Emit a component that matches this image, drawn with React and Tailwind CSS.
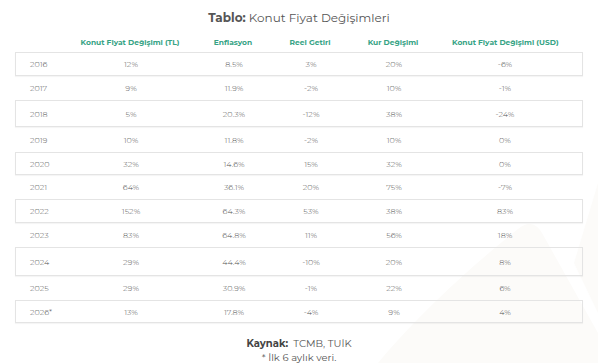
import React from 'react';

const rows = [
  { year: '2016', tl: '12%', inf: '8.5%', reel: '3%', kur: '20%', usd: '-6%', box: true, h: 'h-[24px]' },
  { year: '2017', tl: '9%', inf: '11.9%', reel: '-2%', kur: '10%', usd: '-1%', box: false, h: 'h-[24px]' },
  { year: '2018', tl: '5%', inf: '20.3%', reel: '-12%', kur: '38%', usd: '-24%', box: true, h: 'h-[27px]' },
  { year: '2019', tl: '10%', inf: '11.8%', reel: '-2%', kur: '10%', usd: '0%', box: false, h: 'h-[25px]' },
  { year: '2020', tl: '32%', inf: '14.6%', reel: '15%', kur: '32%', usd: '0%', box: true, h: 'h-[23px]' },
  { year: '2021', tl: '64%', inf: '36.1%', reel: '20%', kur: '75%', usd: '-7%', box: false, h: 'h-[24px]' },
  { year: '2022', tl: '152%', inf: '64.3%', reel: '53%', kur: '38%', usd: '83%', box: true, h: 'h-[24px]' },
  { year: '2023', tl: '83%', inf: '64.8%', reel: '11%', kur: '56%', usd: '18%', box: false, h: 'h-[24px]' },
  { year: '2024', tl: '29%', inf: '44.4%', reel: '-10%', kur: '20%', usd: '8%', box: true, h: 'h-[29px]' },
  { year: '2025', tl: '29%', inf: '30.9%', reel: '-1%', kur: '22%', usd: '6%', box: false, h: 'h-[24px]' },
  { year: '2026*', tl: '13%', inf: '17.8%', reel: '-4%', kur: '9%', usd: '4%', box: true, h: 'h-[23px]' },
];

const cols = 'grid grid-cols-[65px_100px_106px_48px_118px_104px] items-center';

function Watermark() {
  return (
    <svg className="absolute right-0 bottom-0 pointer-events-none" width="230" height="200" viewBox="0 0 230 200">
      <path d="M10 200 C60 140 120 90 150 66 C160 58 168 60 174 70 L230 170 L230 200 Z" fill="#fcfbf9" />
      <path d="M230 20 L206 100 L230 150 Z" fill="#fcfbf9" />
    </svg>
  );
}

export default function App() {
  return (
    <div className="relative w-[598px] h-[363px] bg-white overflow-hidden font-['Montserrat','Inter',sans-serif]">
      <Watermark />
      <div className="relative">
        <h1 className="pt-[9px] h-[30px] text-center text-[12px] leading-[18px] text-[#555]">
          <span className="font-bold">Tablo:</span> Konut Fiyat Değişimleri
        </h1>

        <div className={`${cols} mx-[15px] h-[22px] pt-[3px] text-[7.5px] font-bold text-[#36a385] whitespace-nowrap`}>
          <div />
          <div className="text-center">Konut Fiyat Değişimi (TL)</div>
          <div className="text-center">Enflasyon</div>
          <div className="text-center">Reel Getiri</div>
          <div className="text-center">Kur Değişimi</div>
          <div className="text-center">Konut Fiyat Değişimi (USD)</div>
        </div>

        <div className="mx-[15px] text-[8px] text-[#555] font-light">
          {rows.map((r) => (
            <div
              key={r.year}
              className={`${cols} ${r.h} ${r.box ? 'border border-[#e4e4e4] shadow-[0_1px_1px_rgba(0,0,0,0.04)]' : 'border border-transparent'}`}
            >
              <div className="pl-[14px]">{r.year}</div>
              <div className="text-center">{r.tl}</div>
              <div className="text-center">{r.inf}</div>
              <div className="text-center">{r.reel}</div>
              <div className="text-center">{r.kur}</div>
              <div className="text-center">{r.usd}</div>
            </div>
          ))}
        </div>

        <div className="mt-[14px] text-center text-[10px] leading-[14px] text-[#555]">
          <div>
            <span className="font-bold text-[#444]">Kaynak:</span>&nbsp; TCMB, TUİK
          </div>
          <div>* İlk 6 aylık veri.</div>
        </div>
      </div>
    </div>
  );
}
